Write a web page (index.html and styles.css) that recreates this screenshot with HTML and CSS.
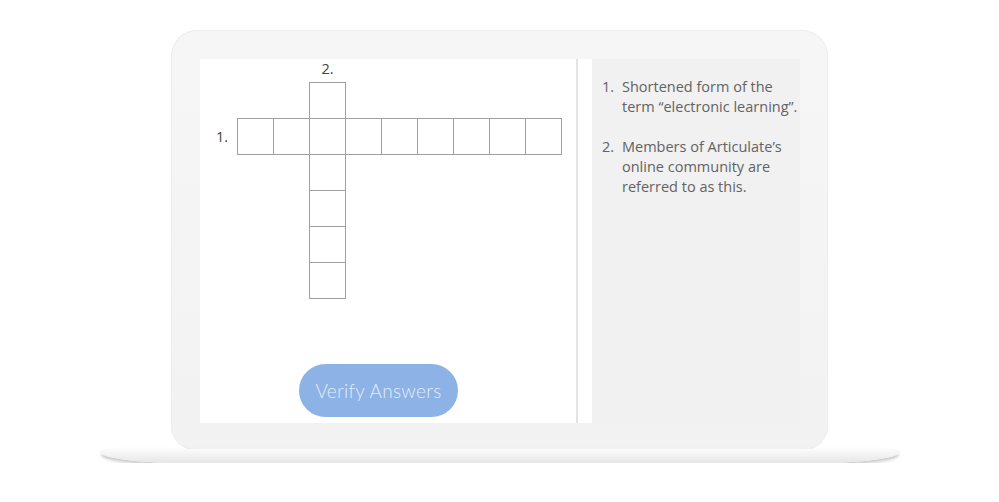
FILE: index.html
```html
<!DOCTYPE html>
<html lang="en">

<head>
    <meta charset="UTF-8">
    <meta name="viewport" content="width=device-width, initial-scale=1.0">
    <title>Crossword</title>

    <link rel="stylesheet" href="styles.css">
</head>

<body>
    <div class="laptop">
        <div class="frame">
            <div class="screen">
                <section class="board">
                    <div class="grid">
                        <span class="label label-down">2.</span>
                        <span class="label label-across">1.</span>

                        <div class="cell" style="grid-column: 4; grid-row: 2"></div>

                        <div class="cell" style="grid-column: 2; grid-row: 3"></div>
                        <div class="cell" style="grid-column: 3; grid-row: 3"></div>
                        <div class="cell" style="grid-column: 4; grid-row: 3"></div>
                        <div class="cell" style="grid-column: 5; grid-row: 3"></div>
                        <div class="cell" style="grid-column: 6; grid-row: 3"></div>
                        <div class="cell" style="grid-column: 7; grid-row: 3"></div>
                        <div class="cell" style="grid-column: 8; grid-row: 3"></div>
                        <div class="cell" style="grid-column: 9; grid-row: 3"></div>
                        <div class="cell" style="grid-column: 10; grid-row: 3"></div>

                        <div class="cell" style="grid-column: 4; grid-row: 4"></div>
                        <div class="cell" style="grid-column: 4; grid-row: 5"></div>
                        <div class="cell" style="grid-column: 4; grid-row: 6"></div>
                        <div class="cell" style="grid-column: 4; grid-row: 7"></div>
                    </div>

                    <button type="button" class="verify">Verify Answers</button>
                </section>

                <aside class="clues">
                    <ol class="clue-list">
                        <li><span class="num">1.</span><span>Shortened form of the term “electronic learning”.</span></li>
                        <li><span class="num">2.</span><span>Members of Articulate’s online community are referred to as this.</span></li>
                    </ol>
                </aside>
            </div>
        </div>
        <div class="base"></div>
    </div>
</body>

</html>
```

FILE: styles.css
```css
body {
    margin: 0;
    background: #ffffff;
    font-family: "Open Sans", sans-serif;
}

.laptop {
    display: flex;
    flex-direction: column;
    align-items: center;
    padding-top: 30px;
}

.frame {
    width: 657px;
    box-sizing: border-box;
    padding: 29px 28px 27px 29px;
    background: linear-gradient(#f6f6f6, #f2f2f2);
    border-radius: 26px 26px 24px 24px;
    box-shadow: inset 0 0 0 1px #eeeeee;
}

.screen {
    display: flex;
    height: 364px;
    background: #ffffff;
}

.board {
    width: 376px;
    border-right: 2px solid #e4e4e4;
    display: flex;
    flex-direction: column;
}

/* crossword: first column holds the across numbers */
.grid {
    display: grid;
    grid-template-columns: 37px repeat(9, 36px);
    grid-template-rows: 18px repeat(6, 36px);
    margin-top: 5px;
}

.cell {
    width: 37px;
    height: 37px;
    box-sizing: border-box;
    border: 1px solid #a0a0a0;
}

.label {
    font-size: 14.5px;
    color: #444444;
}

.label-down {
    grid-column: 4;
    grid-row: 1;
    justify-self: center;
    align-self: start;
    padding-left: 1px;
    margin-top: -5px;
    line-height: 20px;
}

.label-across {
    grid-column: 1;
    grid-row: 3;
    justify-self: end;
    align-self: center;
    padding-right: 9px;
}

.verify {
    margin: auto 0 6px 99px;
    width: 159px;
    height: 53px;
    border: none;
    border-radius: 27px;
    background: #8cb2e6;
    color: #e3ecf9;
    font-family: Lato, sans-serif;
    font-weight: 300;
    font-size: 19px;
    letter-spacing: 0.3px;
}

.clues {
    flex: 1;
    display: flex;
    padding-left: 14px;
}

.clue-list {
    flex: 1;
    margin: 0;
    padding: 18px 0 0 10px;
    list-style: none;
    background: #f1f1f1;
    color: #636363;
    font-size: 14.5px;
    line-height: 20px;
}

.clue-list li {
    display: flex;
    margin-bottom: 20px;
    margin-right: -6px;
}

.num {
    flex: none;
    width: 20px;
}

.base {
    width: 800px;
    height: 14px;
    margin-top: -1px;
    background: linear-gradient(#fbfbfb, #f3f3f3 40%, #e6e6e6);
    border-radius: 3px 3px 90px 90px / 3px 3px 12px 12px;
    box-shadow: 0 3px 3px -1px rgba(0, 0, 0, 0.2), 0 10px 18px rgba(0, 0, 0, 0.05);
}
```
